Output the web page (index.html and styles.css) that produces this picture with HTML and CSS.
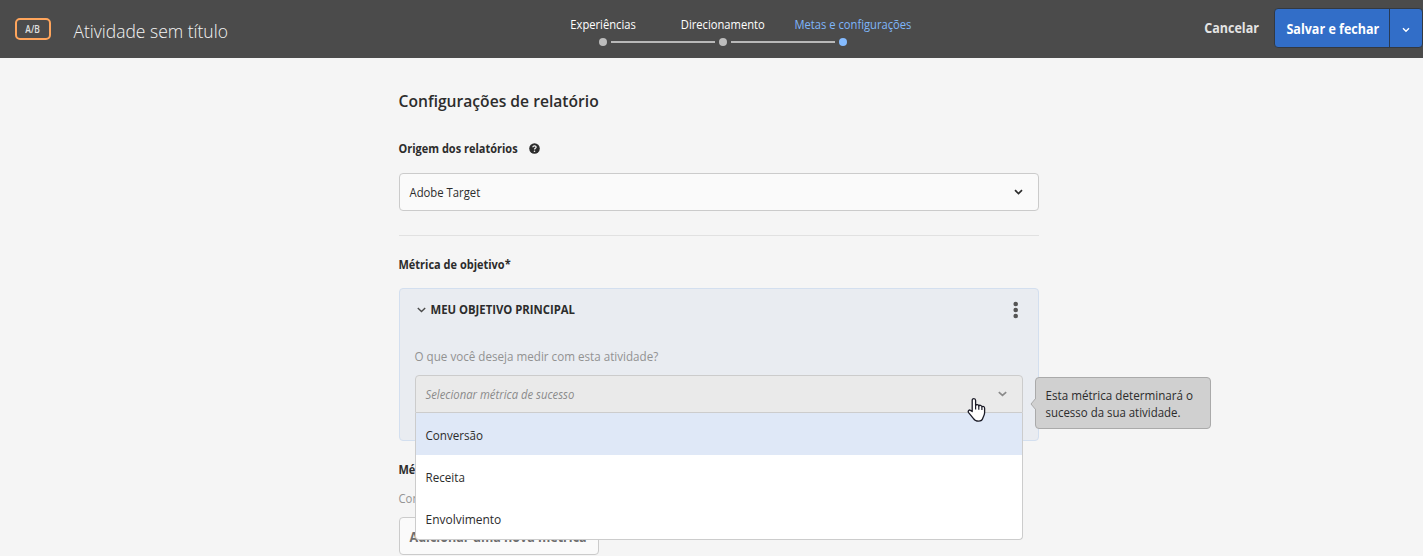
FILE: index.html
```html
<!DOCTYPE html>
<html lang="pt-BR">
<head>
<meta charset="utf-8">
<title>Atividade sem título</title>
<link rel="stylesheet" href="styles.css">
</head>
<body>
<header class="topbar">
  <span class="badge"><span class="mid narrow">A/B</span></span>
  <h1 class="title"><span class="fit wide">Atividade sem título</span></h1>
  <nav class="steps">
    <a class="step"><span class="step-label mid">Experiências</span><i class="dot"></i></a>
    <i class="line"></i>
    <a class="step"><span class="step-label mid">Direcionamento</span><i class="dot"></i></a>
    <i class="line"></i>
    <a class="step active"><span class="step-label label-metas mid">Metas e configurações</span><i class="dot"></i></a>
  </nav>
  <div class="actions">
    <button class="cancel"><span class="mid semi">Cancelar</span></button>
    <div class="save-group">
      <button class="save"><span class="mid semi">Salvar e fechar</span></button>
      <button class="save-more" aria-label="Mais opções"><svg class="chev" width="8" height="6" viewBox="0 0 8 6"><path d="M1 1.2 4 4.2 7 1.2"/></svg></button>
    </div>
  </div>
</header>
<main class="content">
  <h2 class="heading"><span class="fit wide">Configurações de relatório</span></h2>
  <div class="field-label source-label"><span class="source-text"><span class="fit narrow">Origem dos relatórios</span></span>
    <svg class="help" width="11" height="11" viewBox="0 0 11 11"><circle cx="5.5" cy="5.5" r="5.3" fill="#2c2c2c"/><path d="M3.8 4.2C4 2.3 7.2 2.4 7.1 4.2 7 5.3 5.6 5.2 5.5 6.5" fill="none" stroke="#f5f5f5" stroke-width="1.3"/><circle cx="5.5" cy="8.2" r=".8" fill="#f5f5f5"/></svg>
  </div>
  <div class="select"><span class="fit">Adobe Target</span><svg class="chev" width="9" height="6" viewBox="0 0 9 6"><path d="M1 1.2 4.5 4.5 8 1.2"/></svg></div>
  <hr class="rule">
  <div class="field-label goal-label"><span class="fit narrow">Métrica de objetivo*</span></div>
  <section class="panel">
    <div class="panel-head">
      <svg class="chev" width="9" height="6" viewBox="0 0 9 6"><path d="M.8 1 4.5 4.6 8.2 1"/></svg>
      <h3 class="panel-title"><span class="fit">MEU OBJETIVO PRINCIPAL</span></h3>
      <svg class="dots" width="6" height="18" viewBox="0 0 6 18"><circle cx="2.7" cy="3" r="2.3"/><circle cx="2.7" cy="9" r="2.3"/><circle cx="2.7" cy="15" r="2.3"/></svg>
    </div>
    <p class="question"><span class="fit semi">O que você deseja medir com esta atividade?</span></p>
    <div class="metric">
      <div class="metric-select"><em class="fit">Selecionar métrica de sucesso</em><svg class="chev" width="9" height="6" viewBox="0 0 9 6"><path d="M.8 1.2 4.5 4.4 8.2 1.2"/></svg></div>
      <ul class="menu">
        <li class="option selected"><span class="fit semi">Conversão</span></li>
        <li class="option"><span class="fit semi">Receita</span></li>
        <li class="option"><span class="fit wide">Envolvimento</span></li>
      </ul>
      <div class="tooltip"><span class="fit semi">Esta métrica determinará o</span><br><span class="fit tip2">sucesso da sua atividade.</span>
        <svg class="arrow" width="6" height="12" viewBox="0 0 6 12"><path d="M6 0 1 6 6 12" fill="#d0d0d0" stroke="#aaa"/></svg>
      </div>
      <svg class="cursor" width="20" height="26" viewBox="0 0 20 26"><path d="M5.2 14.6V3.4C5.2 .9 8.6 .9 8.6 3.4V8.4C9.2 7.1 11.4 7.3 11.8 8.9 12.5 7.8 14.5 8.1 14.9 9.7 16 8.8 17.6 9.6 17.6 11.2V15.8C17.6 18.2 16.3 19.5 15.8 21.2 15.3 23.6 13.8 24.2 11.5 24.2 8.9 24.2 7.7 23.6 6.5 21.7L1.6 15.6C.5 13.8 2.3 12.4 3.6 13.4Z" fill="#fff" stroke="#1b1b27" stroke-width="1.3" stroke-linejoin="round"/><path d="M8.6 8V12.6M11.8 9V12.8M14.9 10V13" stroke="#1b1b27" stroke-width="1.2"/></svg>
    </div>
  </section>
  <div class="field-label extra-label"><span class="fit narrow">Métricas adicionais</span></div>
  <p class="hint"><span class="fit">Configure métricas adicionais</span></p>
  <button class="add"><span class="fit semi">Adicionar uma nova métrica</span></button>
</main>
</body>
</html>
```
FILE: styles.css
```css
* { box-sizing: border-box; }
body { margin: 0; height: 556px; overflow: hidden; background: #f5f5f5; color: #2c2c2c; font: 500 13px/20px "Open Sans", "Noto Sans", sans-serif; white-space: nowrap; }
h1, h2, h3, p, ul { margin: 0; padding: 0; }
button { font: inherit; margin: 0; padding: 0; border: 0; white-space: nowrap; }
svg { display: block; flex: none; }

/* Condensed lettering */
.fit, .mid { --w: .87; display: inline-block; transform: scaleX(var(--w)); transform-origin: 0 50%; }
.fit { transform: translateX(-.5px) scaleX(var(--w)); }
.mid { --w: .86; transform-origin: 50% 50%; }
.narrow { --w: .845; }
.semi { --w: .895; }
.wide { --w: .92; }
.tip2 { --w: .88; }

.chev path { fill: none; stroke: currentColor; stroke-width: 1.7; }
.topbar { display: grid; grid-template-columns: 36px 446px 446px 1fr; column-gap: 23px; height: 58px; padding-left: 15px; background: #4b4b4b; color: #fff; }
.badge { height: 22px; margin-top: 18px; border: 2px solid #ffa55c; border-radius: 5px; color: #e0e0e0; font-size: 10px; font-weight: 600; line-height: 19px; text-align: center; }
.title { padding-top: 18px; color: #f4f4f4; font-size: 19px; font-weight: 300; line-height: 26px; }
.steps { display: flex; padding: 14px 0 0 52px; align-self: start; }
.step { display: flex; flex: none; flex-direction: column; align-items: center; width: 16px; color: #fff; }
.step-label { height: 24px; }
.label-metas { margin-left: 19px; }
.dot { width: 8px; height: 8px; border-radius: 50%; background: #bdbdbd; }
.line { width: 104px; height: 2px; margin-top: 27px; background: #b9b9b9; }
.active { color: #7fb6fa; }
.active .dot { background: #85bbff; }
.actions { display: flex; justify-content: flex-end; padding: 8px 0 0; font-size: 14px; font-weight: 700; }
.cancel { display: flex; align-items: center; justify-content: center; width: 56px; height: 40px; margin-right: 14px; background: none; color: #e4e4e4; }
.save-group { display: flex; width: 149px; height: 40px; border: 1px solid #333941; border-radius: 4px; background: #326ec8; overflow: hidden; }
.save { width: 115px; padding: 2px 0 0 1px; border-right: 1px solid #283a55; background: none; color: #fff; }
.save-more { flex: 1; display: grid; place-items: center; padding-top: 4px; background: none; color: #fff; }
.save-more path { stroke-width: 1.4; }
.content { width: 640px; margin-left: 399px; padding-top: 30px; }
.heading { font-size: 17px; font-weight: 600; line-height: 26px; }
.field-label { display: flex; align-items: center; font-weight: 700; }
.source-label { margin-top: 24px; gap: 12px; }
.source-text { width: 118px; }
.select { display: flex; align-items: center; justify-content: space-between; height: 38px; margin-top: 15px; padding: 0 15px 0 10px; border: 1px solid #cbcbcb; border-radius: 4px; background: #fafafa; }
.rule { height: 1px; margin: 24px 0 0; border: 0; background: #e1e1e1; }
.goal-label { margin-top: 18px; }
.panel { height: 153px; margin-top: 14px; padding: 11px 15px 0; border: 1px solid #d3dfef; border-radius: 4px; background: #e9ecf1; }
.panel-head { display: flex; align-items: center; height: 20px; padding: 0 4px 0 2px; }
.panel-head .chev path { stroke: #4b4b4b; stroke-width: 1.4; }
.panel-title { flex: 1; margin: 0 0 2px 5px; font-size: 13px; font-weight: 700; }
.dots { fill: #555; }
.question { margin-top: 26px; color: #929292; }
.metric { position: relative; width: 608px; height: 38px; margin-top: 9px; }
.metric-select { display: flex; align-items: center; justify-content: space-between; height: 38px; padding: 0 15px 0 10px; border: 1px solid #ccc; border-radius: 4px 4px 0 0; background: #eaeaea; color: #8a8a8a; }
.menu { position: absolute; z-index: 2; top: 38px; left: 0; width: 608px; height: 127px; border: 1px solid #ccc; border-top: 0; border-radius: 0 0 4px 4px; background: #fff; list-style: none; overflow: hidden; }
.option { height: 42px; padding: 12px 10px 0; }
.selected { background: #dfe8f7; }
.tooltip { position: absolute; z-index: 3; top: 2px; left: 620px; width: 176px; height: 52px; padding: 9px 10px 0; border: 1px solid #aaa; border-radius: 4px; background: #d0d0d0; line-height: 17px; }
.arrow { position: absolute; left: -6px; top: 20px; }
.cursor { position: absolute; z-index: 4; left: 552px; top: 22px; }
.extra-label { margin-top: 18px; }
.hint { margin-top: 9px; color: #949494; }
.add { width: 200px; height: 38px; margin-top: 9px; padding: 1px 0 0 10px; border: 1px solid #cbcbcb; border-radius: 4px; background: #fafafa; color: #6e6e6e; font-size: 14px; font-weight: 700; text-align: left; }
```
